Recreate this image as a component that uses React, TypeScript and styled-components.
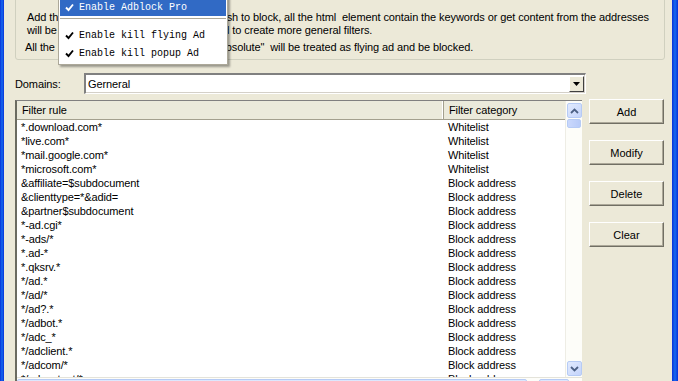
import React from "react";
import styled, { createGlobalStyle } from "styled-components";

const GlobalStyle = createGlobalStyle`
  html, body {
    margin: 0;
    padding: 0;
    overflow: hidden;
    background: #ece9d8;
  }
`;

const UI_FONT = `"Liberation Sans", "DejaVu Sans", sans-serif`;

const Window = styled.div`
  display: flex;
  width: 678px;
  height: 381px;
  overflow: hidden;
  background: #ece9d8;
  font-family: ${UI_FONT};
  font-size: 11px;
  letter-spacing: -0.1px;
  color: #000;
  position: relative;
`;

const FrameEdge = styled.div<{ $w: number }>`
  width: ${(p) => p.$w}px;
  flex-shrink: 0;
  background: linear-gradient(90deg, #0831d9, #166aee 50%, #0831d9);
`;

const Body = styled.div`
  flex: 1;
  display: flex;
  flex-direction: column;
  padding: 0 7px 0 11px;
  position: relative;
  overflow: hidden;
  & > * {
    flex-shrink: 0;
  }
`;

const InfoBox = styled.div`
  box-sizing: border-box;
  margin-top: -6px;
  height: 66px;
  border: 1px solid #d0d0bf;
  border-radius: 3px;
  padding: 16px 0 0 11px;
  white-space: nowrap;
  overflow: hidden;
  line-height: 13px;
`;

const InfoLine = styled.div<{ $gap?: number; $indent?: number }>`
  margin-top: ${(p) => p.$gap ?? 0}px;
  margin-left: ${(p) => p.$indent ?? 0}px;
`;

const Menu = styled.div`
  position: absolute;
  left: 54px;
  top: -5px;
  width: 168px;
  padding: 2px 0 2px;
  background: #fff;
  border: 1px solid #aca899;
  box-shadow: 2px 2px 2px rgba(0, 0, 0, 0.35);
  font-family: "Liberation Mono", "DejaVu Sans Mono", monospace;
  font-size: 10px;
  letter-spacing: 0;
  z-index: 5;
`;

const MenuItem = styled.div<{ $active?: boolean }>`
  display: flex;
  align-items: center;
  height: 18px;
  margin: 0 1px;
  padding-left: 5px;
  gap: 5px;
  background: ${(p) => (p.$active ? "#316ac5" : "transparent")};
  color: ${(p) => (p.$active ? "#fff" : "#000")};
`;

const MenuSeparator = styled.div`
  height: 1px;
  margin: 2px 1px 7px;
  background: #aca899;
`;

const DomainRow = styled.div`
  display: flex;
  align-items: center;
  margin-top: 13px;
  height: 21px;
  width: 571px;
`;

const DomainLabel = styled.span`
  width: 69px;
`;

const Combo = styled.div`
  flex: 1;
  display: flex;
  align-items: center;
  height: 21px;
  box-sizing: border-box;
  background: #fff;
  border-top: 2px solid #808080;
  border-left: 2px solid #808080;
  border-right: 1px solid #fff;
  border-bottom: 1px solid #fff;
  box-shadow: inset -1px -1px 0 #d4d0c8;
  padding-left: 2px;
`;

const ComboText = styled.span`
  flex: 1;
`;

const ComboButton = styled.div`
  width: 15px;
  height: 16px;
  margin-right: 1px;
  display: flex;
  align-items: center;
  justify-content: center;
  background: #ece9d8;
  border-top: 1px solid #fff;
  border-left: 1px solid #fff;
  border-right: 1px solid #404040;
  border-bottom: 1px solid #404040;
  box-sizing: border-box;
`;

const Main = styled.div`
  display: flex;
  gap: 7px;
  margin-top: 6px;
  align-items: flex-start;
`;

const ListFrame = styled.div`
  width: 567px;
  box-sizing: border-box;
  border-top: 1px solid #808080;
  border-left: 2px solid #6b6b60;
  display: flex;
  flex-direction: column;
  background: #fff;
`;

const ListTop = styled.div`
  display: flex;
  height: 276px;
`;

const ListColumns = styled.div`
  flex: 1;
  display: flex;
  flex-direction: column;
  overflow: hidden;
`;

const HeaderRow = styled.div`
  display: flex;
  height: 18px;
  background: #ebeadb;
  border-bottom: 1px solid #a3a08e;
  flex-shrink: 0;
`;

const HeaderCell = styled.div<{ $w: number; $last?: boolean }>`
  width: ${(p) => p.$w}px;
  flex-shrink: 0;
  box-sizing: border-box;
  padding-left: 5px;
  line-height: 18px;
  border-right: ${(p) => (p.$last ? "none" : "1px solid #a3a08e")};
  box-shadow: ${(p) => (p.$last ? "none" : "inset -1px 0 0 #fff")};
`;

const Row = styled.div`
  display: flex;
  height: 14px;
  line-height: 14px;
  flex-shrink: 0;
  white-space: nowrap;
`;

const Cell = styled.div<{ $w: number }>`
  width: ${(p) => p.$w}px;
  flex-shrink: 0;
  padding-left: 4px;
  box-sizing: border-box;
`;

const VScroll = styled.div`
  width: 17px;
  flex-shrink: 0;
  display: flex;
  flex-direction: column;
  background: #fdfdf9;
  border-left: 1px solid #eeede5;
  box-sizing: border-box;
  padding: 2px 1px 1px 1px;
`;

const ScrollButton = styled.div`
  width: 15px;
  height: 15px;
  box-sizing: border-box;
  border: 1px solid #b6cbf5;
  border-radius: 2px;
  background: linear-gradient(135deg, #e1eafe, #c4d4fb);
  display: flex;
  align-items: center;
  justify-content: center;
  flex-shrink: 0;
`;

const Thumb = styled.div`
  height: 9px;
  margin-top: 1px;
  box-sizing: border-box;
  border: 1px solid #b6cbf5;
  border-radius: 2px;
  background: linear-gradient(90deg, #cad8fc, #b8cbf8);
`;

const Track = styled.div`
  flex: 1;
`;

const HScroll = styled.div`
  height: 17px;
  display: flex;
  gap: 12px;
  background: #fdfdf9;
  border-top: 1px solid #e4e3da;
  padding: 1px 0 0 0;
`;

const HThumb = styled.div<{ $w: number }>`
  width: ${(p) => p.$w}px;
  height: 15px;
  box-sizing: border-box;
  border: 1px solid #b6cbf5;
  border-radius: 2px;
  background: linear-gradient(180deg, #dde7fd, #c6d6fb);
`;

const ButtonColumn = styled.div`
  display: flex;
  flex-direction: column;
  gap: 16px;
  margin-top: -1px;
`;

const Button = styled.button`
  width: 75px;
  height: 25px;
  padding: 0;
  font-family: ${UI_FONT};
  font-size: 11px;
  color: #000;
  background: #ece9d8;
  border-top: 1px solid #fff;
  border-left: 1px solid #fff;
  border-right: 1px solid #716f64;
  border-bottom: 1px solid #716f64;
  box-shadow: inset -1px -1px 0 #aca899;
`;

const Check = () => (
  <svg width="9" height="9" viewBox="0 0 9 9">
    <path d="M1 4.5 L3.5 7 L8 1.5" stroke="currentColor" strokeWidth="1.9" fill="none" />
  </svg>
);

const Chevron = ({ up }: { up?: boolean }) => (
  <svg width="9" height="6" viewBox="0 0 9 6">
    <path
      d={up ? "M1 5 L4.5 1.5 L8 5" : "M1 1 L4.5 4.5 L8 1"}
      stroke="#4d6185"
      strokeWidth="1.8"
      fill="none"
    />
  </svg>
);

const rules: [string, string][] = [
  ["*.download.com*", "Whitelist"],
  ["*live.com*", "Whitelist"],
  ["*mail.google.com*", "Whitelist"],
  ["*microsoft.com*", "Whitelist"],
  ["&affiliate=$subdocument", "Block address"],
  ["&clienttype=*&adid=", "Block address"],
  ["&partner$subdocument", "Block address"],
  ["*-ad.cgi*", "Block address"],
  ["*-ads/*", "Block address"],
  ["*.ad-*", "Block address"],
  ["*.qksrv.*", "Block address"],
  ["*/ad.*", "Block address"],
  ["*/ad/*", "Block address"],
  ["*/ad?.*", "Block address"],
  ["*/adbot.*", "Block address"],
  ["*/adc_*", "Block address"],
  ["*/adclient.*", "Block address"],
  ["*/adcom/*", "Block address"],
  ["*/adcontent/*", "Block address"],
];

export default function App() {
  return (
    <>
      <GlobalStyle />
      <Window>
        <FrameEdge $w={4} />
        <Body>
          <InfoBox>
            <InfoLine>
              Add the keyword or any addresses you wish to block, all the html&nbsp; element contain the keywords or get content from the addresses
            </InfoLine>
            <InfoLine>
              will be blocked, the wildcard * can be used to create more general filters.
            </InfoLine>
            <InfoLine $gap={4} $indent={-2}>
              All the html elements whose position is&nbsp; "absolute"&nbsp; will be treated as flying ad and be blocked.
            </InfoLine>
          </InfoBox>
          <Menu>
            <MenuItem $active>
              <Check />
              Enable Adblock Pro
            </MenuItem>
            <MenuSeparator />
            <MenuItem>
              <Check />
              Enable kill flying Ad
            </MenuItem>
            <MenuItem>
              <Check />
              Enable kill popup Ad
            </MenuItem>
          </Menu>
          <DomainRow>
            <DomainLabel>Domains:</DomainLabel>
            <Combo>
              <ComboText>Gerneral</ComboText>
              <ComboButton>
                <svg width="7" height="4" viewBox="0 0 7 4">
                  <path d="M0 0 H7 L3.5 4 Z" fill="#000" />
                </svg>
              </ComboButton>
            </Combo>
          </DomainRow>
          <Main>
            <ListFrame>
              <ListTop>
                <ListColumns>
                  <HeaderRow>
                    <HeaderCell $w={427}>Filter rule</HeaderCell>
                    <HeaderCell $w={121} $last>
                      Filter category
                    </HeaderCell>
                  </HeaderRow>
                  {rules.map(([rule, cat], i) => (
                    <Row key={i}>
                      <Cell $w={427}>{rule}</Cell>
                      <Cell $w={121}>{cat}</Cell>
                    </Row>
                  ))}
                </ListColumns>
                <VScroll>
                  <ScrollButton>
                    <Chevron up />
                  </ScrollButton>
                  <Thumb />
                  <Track />
                  <ScrollButton>
                    <Chevron />
                  </ScrollButton>
                </VScroll>
              </ListTop>
              <HScroll>
                <HThumb $w={510} />
                <HThumb $w={30} />
              </HScroll>
            </ListFrame>
            <ButtonColumn>
              <Button>Add</Button>
              <Button>Modify</Button>
              <Button>Delete</Button>
              <Button>Clear</Button>
            </ButtonColumn>
          </Main>
        </Body>
        <FrameEdge $w={6} />
      </Window>
    </>
  );
}
